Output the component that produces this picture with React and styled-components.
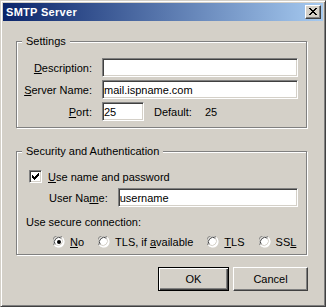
import styled, { createGlobalStyle } from 'styled-components'

const GlobalStyle = createGlobalStyle`
  html, body {
    margin: 0;
    padding: 0;
    background: #d4d0c8;
  }
  * {
    box-sizing: border-box;
  }
`

const App = () => {
  return (
    <>
      <GlobalStyle />
      <Window>
        <TitleBar>
          <Title>SMTP Server</Title>
          <CloseButton>
            <svg width="8" height="7" viewBox="0 0 8 7" shapeRendering="crispEdges">
              <path
                fill="#000"
                d="M0 0h2v1H0zM6 0h2v1H6zM1 1h2v1H1zM5 1h2v1H5zM2 2h4v1H2zM3 3h2v1H3zM2 4h4v1H2zM1 5h2v1H1zM5 5h2v1H5zM0 6h2v1H0zM6 6h2v1H6z"
              />
            </svg>
          </CloseButton>
        </TitleBar>
        <Body>
          <GroupBox>
            <Legend>Settings</Legend>
            <FieldGrid>
              <FieldLabel><u>D</u>escription:</FieldLabel>
              <TextInput readOnly defaultValue="" />
              <FieldLabel><u>S</u>erver Name:</FieldLabel>
              <TextInput readOnly defaultValue="mail.ispname.com" />
              <FieldLabel><u>P</u>ort:</FieldLabel>
              <PortRow>
                <TextInput readOnly defaultValue="25" $width={42} />
                <Note>Default:</Note>
                <Note>25</Note>
              </PortRow>
            </FieldGrid>
          </GroupBox>

          <GroupBox $spaced>
            <Legend>Security and Authentication</Legend>
            <SecurityBody>
              <CheckRow>
                <CheckBox>
                  <svg width="7" height="7" viewBox="0 0 7 7" shapeRendering="crispEdges">
                    <path
                      fill="#000"
                      d="M6 0h1v1H6zM5 1h2v1H5zM0 2h1v1H0zM4 2h3v1H4zM0 3h2v1H0zM3 3h3v1H3zM0 4h5v1H0zM1 5h3v1H1zM2 6h1v1H2z"
                    />
                  </svg>
                </CheckBox>
                <span><u>U</u>se name and password</span>
              </CheckRow>
              <UserRow>
                <span>User Na<u>m</u>e:</span>
                <TextInput readOnly defaultValue="username" />
              </UserRow>
              <SectionText>Use secure connection:</SectionText>
              <RadioRow>
                <RadioOption>
                  <Radio checked />
                  <span><u>N</u>o</span>
                </RadioOption>
                <RadioOption>
                  <Radio />
                  <span>TLS, if <u>a</u>vailable</span>
                </RadioOption>
                <RadioOption>
                  <Radio />
                  <span><u>T</u>LS</span>
                </RadioOption>
                <RadioOption>
                  <Radio />
                  <span>SS<u>L</u></span>
                </RadioOption>
              </RadioRow>
            </SecurityBody>
          </GroupBox>

          <ButtonRow>
            <PushButton $default $width={71}>OK</PushButton>
            <PushButton $width={75}>Cancel</PushButton>
          </ButtonRow>
        </Body>
      </Window>
    </>
  )
}

const Radio = ({ checked }) => (
  <svg width="12" height="12" viewBox="0 0 12 12">
    <circle cx="6" cy="6" r="5.5" fill="#fff" />
    <path d="M1.2 9.2A5.5 5.5 0 0 1 9.2 1.2" fill="none" stroke="#808080" strokeWidth="1" />
    <path d="M9.2 1.2A5.5 5.5 0 0 1 1.2 9.2" fill="none" stroke="#fff" strokeWidth="1" />
    <path d="M2.3 8.6A4.5 4.5 0 0 1 8.6 2.3" fill="none" stroke="#404040" strokeWidth="1" />
    <path d="M8.6 2.3A4.5 4.5 0 0 1 2.3 8.6" fill="none" stroke="#d4d0c8" strokeWidth="1" />
    {checked && <circle cx="6" cy="6" r="2" fill="#000" />}
  </svg>
)

const Window = styled.div`
  width: 326px;
  height: 307px;
  padding: 2px;
  border: 1px solid;
  border-color: #d4d0c8 #404040 #404040 #d4d0c8;
  box-shadow: inset 1px 1px 0 #fff, inset -1px -1px 0 #808080;
  background: #d4d0c8;
  display: flex;
  flex-direction: column;
  font-family: "Liberation Sans", Arial, sans-serif;
  font-size: 11px;
  color: #000;
`
const TitleBar = styled.div`
  height: 18px;
  display: flex;
  align-items: center;
  padding: 0 2px 0 3px;
  background: linear-gradient(to right, #0a246a, #a6caf0);
`
const Title = styled.div`
  color: #fff;
  font-weight: bold;
  font-size: 11px;
  letter-spacing: 0.3px;
`
const CloseButton = styled.div`
  margin-left: auto;
  width: 16px;
  height: 14px;
  display: flex;
  align-items: center;
  justify-content: center;
  background: #d4d0c8;
  border: 1px solid;
  border-color: #fff #404040 #404040 #fff;
  box-shadow: inset -1px -1px 0 #808080;
  padding-bottom: 1px;
`
const Body = styled.div`
  display: flex;
  flex-direction: column;
  padding: 14px 16px 0 13px;
`
const GroupBox = styled.fieldset`
  margin: ${(p) => (p.$spaced ? '17px' : '0')} 0 0 0;
  padding: 0;
  min-width: 0;
  border: 1px solid #808080;
  box-shadow: 1px 1px 0 #fff, inset 1px 1px 0 #fff;
`
const Legend = styled.legend`
  margin-left: 5px;
  padding: 0 4px;
  line-height: 13px;
  background: #d4d0c8;
`
const FieldGrid = styled.div`
  display: grid;
  grid-template-columns: 75px 1fr;
  grid-auto-rows: 19px;
  column-gap: 10px;
  row-gap: 3px;
  align-items: center;
  padding: 10px 8px 6px 0;
`
const FieldLabel = styled.span`
  text-align: right;
  white-space: nowrap;
`
const TextInput = styled.input`
  width: ${(p) => (p.$width ? `${p.$width}px` : '100%')};
  height: 19px;
  margin: 0;
  padding: 0 1px;
  border: 1px solid;
  border-color: #808080 #fff #fff #808080;
  box-shadow: inset 1px 1px 0 #404040, inset -1px -1px 0 #d4d0c8;
  background: #fff;
  font: inherit;
  color: #000;
  outline: none;
`
const PortRow = styled.div`
  display: flex;
  align-items: center;
  gap: 10px;
  & > span:last-child {
    margin-left: 3px;
  }
`
const Note = styled.span`
  white-space: nowrap;
`
const SecurityBody = styled.div`
  display: flex;
  flex-direction: column;
  padding: 11px 8px 6px 0;
`
const CheckRow = styled.div`
  height: 15px;
  display: flex;
  align-items: center;
  gap: 6px;
  padding-left: 12px;
`
const CheckBox = styled.span`
  width: 13px;
  height: 13px;
  display: flex;
  align-items: center;
  justify-content: center;
  border: 1px solid;
  border-color: #808080 #fff #fff #808080;
  box-shadow: inset 1px 1px 0 #404040, inset -1px -1px 0 #d4d0c8;
  background: #fff;
`
const UserRow = styled.div`
  display: flex;
  align-items: center;
  gap: 10px;
  margin-top: 4px;
  padding-left: 32px;
  & > span {
    white-space: nowrap;
  }
`
const SectionText = styled.div`
  line-height: 13px;
  margin-top: 9px;
  padding-left: 9px;
`
const RadioRow = styled.div`
  display: flex;
  align-items: center;
  gap: 14px;
  height: 13px;
  margin-top: 6px;
  padding-left: 36px;
`
const RadioOption = styled.div`
  display: flex;
  align-items: center;
  gap: 5px;
  white-space: nowrap;
  & > svg {
    flex: 0 0 auto;
  }
`
const ButtonRow = styled.div`
  display: flex;
  justify-content: flex-end;
  gap: 4px;
  margin-top: 12px;
  margin-right: -1px;
`
const PushButton = styled.button`
  width: ${(p) => p.$width}px;
  height: 24px;
  margin: 0;
  padding: 0;
  font: inherit;
  color: #000;
  background: #d4d0c8;
  border: 1px solid;
  border-color: ${(p) => (p.$default ? '#000' : '#fff #404040 #404040 #fff')};
  box-shadow: ${(p) =>
    p.$default
      ? 'inset 1px 1px 0 #fff, inset -1px -1px 0 #404040, inset -2px -2px 0 #808080'
      : 'inset -1px -1px 0 #808080'};
`

export default App
